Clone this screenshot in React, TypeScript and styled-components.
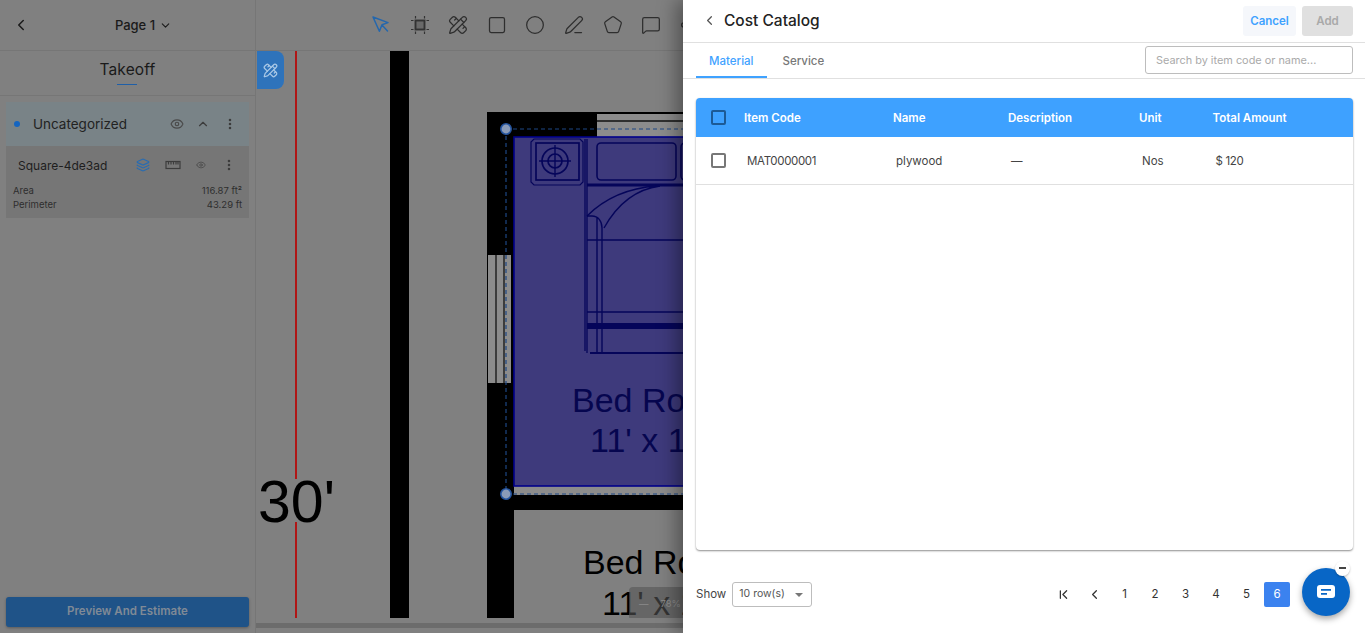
import styled, { createGlobalStyle } from "styled-components";
import {
  ChevronDown,
  ChevronFirst,
  ChevronLeft,
  ChevronUp,
  Circle,
  EllipsisVertical,
  Eye,
  Layers,
  MessageSquare,
  PencilRuler,
  PenLine,
  Pentagon,
  Square,
  Waypoints,
} from "lucide-react";

const Global = createGlobalStyle`
  html, body {
    margin: 0;
    padding: 0;
    height: 100%;
    overflow: hidden;
  }
  body {
    font-family: Inter, "Open Sans", "Liberation Sans", sans-serif;
    color: #1b1b1b;
  }
  * {
    box-sizing: border-box;
  }
`;

const Page = styled.div`
  position: relative;
  display: flex;
  width: 1365px;
  height: 633px;
  overflow: hidden;
  background: #808080;
`;

/* left panel */
const Sidebar = styled.aside`
  display: flex;
  flex-direction: column;
  width: 256px;
  flex-shrink: 0;
  border-right: 1px solid #767676;
`;

const PageBar = styled.div`
  display: flex;
  align-items: center;
  justify-content: center;
  position: relative;
  height: 51px;
  border-bottom: 1px solid #767676;
  font-size: 13px;
  font-weight: 500;
  gap: 4px;
  padding-left: 32px;
  color: #1a1a1a;
`;

const BackIcon = styled.span`
  position: absolute;
  left: 12px;
  top: 16px;
  display: flex;
`;

const TakeoffTab = styled.div`
  position: relative;
  height: 45px;
  border-bottom: 1px solid #767676;
  text-align: center;
  font-size: 15.5px;
  letter-spacing: 0.15px;
  line-height: 38px;
  color: #1a1a1a;

  &::after {
    content: "";
    position: absolute;
    left: 117px;
    bottom: 10px;
    width: 20px;
    height: 1px;
    background: #1f5fa8;
  }
`;

const Group = styled.section`
  margin: 6px 6px 0;
  width: 243px;
`;

const GroupHead = styled.div`
  display: flex;
  align-items: center;
  height: 44px;
  padding: 0 0 0 8px;
  background: #798387;
  font-size: 13.5px;
  color: #222;
`;

const Dot = styled.span`
  width: 6px;
  height: 6px;
  border-radius: 50%;
  background: #1565c0;
  margin-right: 13px;
`;

const Grow = styled.span`
  flex: 1;
`;

const IconSlot = styled.span<{ $w: number; $color?: string }>`
  display: flex;
  justify-content: center;
  width: ${(p) => p.$w}px;
  color: ${(p) => p.$color || "#3c3c3c"};
`;

const ShapeBlock = styled.div`
  height: 72px;
  background: #767676;
  padding: 0 7px;
`;

const ShapeHead = styled.div`
  display: flex;
  align-items: center;
  height: 38px;
  padding-left: 5px;
  font-size: 12px;
  color: #1e1e1e;
`;

const Metric = styled.div`
  display: flex;
  justify-content: space-between;
  height: 14px;
  font-size: 9.5px;
  line-height: 14px;
  color: #2e2e2e;
`;

const Preview = styled.button`
  margin: auto 6px 6px;
  height: 30px;
  width: 243px;
  padding: 0 0 2px;
  border: 0;
  border-radius: 3px;
  background: #1f5388;
  color: #808a96;
  font: 600 11.5px Inter, sans-serif;
  box-shadow: 0 1px 3px rgba(0, 0, 0, 0.3);
`;

/* canvas */
const Canvas = styled.main`
  flex: 1;
  display: flex;
  flex-direction: column;
  min-width: 0;
`;

const Toolbar = styled.div`
  display: flex;
  align-items: center;
  gap: 18.6px;
  height: 51px;
  padding-left: 115px;
  border-bottom: 1px solid #767676;
  color: #2e2e2e;
  flex-shrink: 0;
`;

const PlanArea = styled.div`
  position: relative;
  height: 567px;
  overflow: hidden;
  flex-shrink: 0;
`;

const Plan = styled.svg`
  display: block;
`;

const SideTab = styled.div`
  position: absolute;
  left: 1px;
  top: 0;
  width: 27px;
  height: 38px;
  display: flex;
  align-items: center;
  justify-content: center;
  border-radius: 0 8px 8px 0;
  background: #2e73bb;
  color: #a9c8e6;
`;

const ZoomPill = styled.div`
  position: absolute;
  left: 373px;
  top: 536px;
  width: 120px;
  height: 33px;
  padding-left: 10px;
  display: flex;
  align-items: center;
  gap: 12px;
  border-radius: 4px;
  background: rgba(85, 85, 85, 0.6);
  color: #8c8c8c;
  font-size: 9.5px;
`;

const ScrollTrack = styled.div`
  height: 5px;
  margin-top: 5px;
  background: #6c6c6c;
`;

/* drawer */
const Drawer = styled.div`
  position: absolute;
  top: 0;
  right: 0;
  bottom: 0;
  width: 682px;
  display: flex;
  flex-direction: column;
  background: #fff;
  box-shadow: -6px 0 18px rgba(0, 0, 0, 0.38);
`;

const DrawerHead = styled.header`
  display: flex;
  align-items: center;
  height: 43px;
  flex-shrink: 0;
  padding: 0 12px 1px 19px;
  border-bottom: 1px solid #e0e0e0;
`;

const Title = styled.h1`
  margin: 0 0 0 7px;
  flex: 1;
  font-size: 15.5px;
  font-weight: 500;
  color: #222;
`;

const HeadButton = styled.button<{ $primary?: boolean }>`
  height: 30px;
  width: ${(p) => (p.$primary ? 51 : 53)}px;
  margin-left: ${(p) => (p.$primary ? 6 : 0)}px;
  padding: 0;
  border: 0;
  border-radius: 3px;
  background: ${(p) => (p.$primary ? "#e0e0e0" : "#f5f7fb")};
  color: ${(p) => (p.$primary ? "#a9a9a9" : "#3fa2ff")};
  font: 600 11.5px Inter, sans-serif;
`;

const TabRow = styled.div`
  display: flex;
  align-items: stretch;
  height: 36px;
  flex-shrink: 0;
  padding: 0 12px 0 13px;
  border-bottom: 1px solid #e0e0e0;
`;

const Tab = styled.div<{ $active?: boolean }>`
  display: flex;
  align-items: center;
  justify-content: center;
  height: 35px;
  padding: 2px ${(p) => (p.$active ? 13 : 15)}px 0 ${(p) => (p.$active ? 13 : 16)}px;
  font-size: 11.5px;
  font-weight: 500;
  color: ${(p) => (p.$active ? "#3fa2ff" : "#777")};
  border-bottom: 2px solid ${(p) => (p.$active ? "#3fa2ff" : "transparent")};
`;

const Search = styled.input`
  margin: 3px 0 0 auto;
  width: 208px;
  height: 28px;
  padding: 0 10px;
  border: 1px solid #bdbdbd;
  border-radius: 3px;
  font: 400 10.9px Inter, sans-serif;
  &::placeholder {
    color: #aaa;
  }
`;

const TableCard = styled.div`
  margin: 19px 12px 0 13px;
  height: 452px;
  flex-shrink: 0;
  border-radius: 4px;
  background: #fff;
  overflow: hidden;
  box-shadow: 0 1px 2px rgba(0, 0, 0, 0.45);
`;

const columns = "48px 149px 115px 131px 73.5px 1fr";

const HeadRow = styled.div`
  display: grid;
  grid-template-columns: ${columns};
  align-items: center;
  height: 39px;
  background: #3ea1ff;
  color: #fff;
  font-size: 11.5px;
  font-weight: 600;
`;

const BodyRow = styled.div`
  display: grid;
  grid-template-columns: ${columns};
  align-items: center;
  height: 48px;
  border-bottom: 1px solid #e0e0e0;
  font-size: 11.5px;
  color: #444;
`;

const Cell = styled.div<{ $tight?: boolean }>`
  padding-left: 3px;
  letter-spacing: ${(p) => (p.$tight ? "-0.35px" : "0")};
`;

const Check = styled.span<{ $dark?: boolean }>`
  display: block;
  width: 15px;
  height: 15px;
  margin-left: 15px;
  border: 2px solid ${(p) => (p.$dark ? "#1c5a96" : "#777")};
  border-radius: 2px;
`;

const Footer = styled.footer`
  display: flex;
  align-items: center;
  height: 57px;
  margin-top: 19px;
  padding: 0 75px 7px 13px;
  font-size: 11.5px;
  color: #444;
`;

const RowSelect = styled.div`
  display: flex;
  align-items: center;
  justify-content: space-between;
  width: 80px;
  height: 25px;
  margin-left: 6px;
  padding: 0 8px 2px 6px;
  border: 1px solid #bdbdbd;
  border-radius: 3px;
  font-size: 10.5px;
  color: #555;
`;

const Caret = styled.span`
  width: 0;
  height: 0;
  margin-top: 3px;
  border-left: 4px solid transparent;
  border-right: 4px solid transparent;
  border-top: 4px solid #777;
`;

const Pager = styled.nav`
  display: flex;
  gap: 4.5px;
  margin-left: auto;
`;

const PageCell = styled.div<{ $active?: boolean }>`
  display: flex;
  align-items: center;
  justify-content: center;
  width: 26px;
  height: 25px;
  border-radius: 2px;
  background: ${(p) => (p.$active ? "#3b82ef" : "transparent")};
  color: ${(p) => (p.$active ? "#fff" : "#333")};
  font-size: 11.5px;
`;

const ChatFab = styled.div`
  position: absolute;
  right: 15px;
  bottom: 17px;
  width: 48px;
  height: 48px;
  display: flex;
  align-items: center;
  justify-content: center;
  border-radius: 50%;
  background: #0866c6;
  box-shadow: 0 3px 6px rgba(0, 0, 0, 0.35);
`;

const Minimize = styled.span`
  position: absolute;
  top: -7px;
  right: 0;
  width: 15px;
  height: 15px;
  border-radius: 50%;
  background: #fff;
  box-shadow: 0 1px 2px rgba(0, 0, 0, 0.25);

  &::after {
    content: "";
    position: absolute;
    left: 4px;
    top: 6px;
    width: 7px;
    height: 2px;
    background: #444;
  }
`;

function SelectArrow() {
  return (
    <svg width="20" height="20" viewBox="0 0 20 20" fill="none" stroke="#2467ad" strokeWidth="1.5" strokeLinejoin="round" strokeLinecap="round">
      <path d="M2 2l15 5.6-6 2.2-2.6 6.4zM11 10l5.5 6" />
    </svg>
  );
}

function FrameIcon() {
  return (
    <svg width="20" height="20" viewBox="0 0 20 20" fill="none" stroke="#333" strokeWidth="1.2">
      <rect x="5.5" y="5.5" width="9" height="9" strokeWidth="1.9" fill="#6a6a6a" />
      <path d="M5.5 1v2.5M14.5 1v2.5M5.5 16.5V19M14.5 16.5V19M1 5.5h2.5M1 14.5h2.5M16.5 5.5H19M16.5 14.5H19" />
    </svg>
  );
}

function RulerIcon() {
  return (
    <svg width="16" height="10" viewBox="0 0 16 10" fill="none" stroke="#3c3c3c" strokeWidth="1.2">
      <rect x="1" y="1.5" width="14" height="7" />
      <path d="M3.5 1.5v3M6 1.5v3M8.5 1.5v3M11 1.5v3M13 1.5v3" />
    </svg>
  );
}

function ChatIcon() {
  return (
    <svg width="20" height="18" viewBox="0 0 20 18">
      <path d="M4 2h12a3 3 0 0 1 3 3v7a3 3 0 0 1-3 3H4a3 3 0 0 1-3-3V5a3 3 0 0 1 3-3z" fill="#fff" />
      <path d="M5 6.8h10M5 10.8h6" stroke="#0866c6" strokeWidth="1.8" />
    </svg>
  );
}

const PLAN_TEXT = "Liberation Sans, Arial, sans-serif";
const LINE = "#05055a";

// viewBox uses page coordinates so the drawing reads the same as the screenshot
function FloorPlan() {
  return (
    <Plan width="444" height="567" viewBox="256 51 444 567">
      <path d="M296 51V479M296 522V618" stroke="#b01616" strokeWidth="2" />
      <text x="258" y="522" fontFamily={PLAN_TEXT} fontSize="59" fill="#000">30'</text>
      <rect x="390" y="51" width="19" height="567" fill="#000" />

      <rect x="487" y="112" width="27" height="506" fill="#000" />
      <rect x="487" y="112" width="213" height="25" fill="#000" />
      <rect x="597" y="114" width="103" height="23" fill="#8c8c8c" />
      <path d="M597 121h103" stroke="#111" strokeWidth="1.5" />
      <rect x="488" y="255" width="23" height="128" fill="#8c8c8c" />
      <path d="M496 255v128M504 255v128" stroke="#222" strokeWidth="1.5" />
      <rect x="514" y="486" width="186" height="9" fill="#8c8c8c" />
      <rect x="514" y="495" width="186" height="15" fill="#000" />

      <rect x="514" y="137" width="190" height="349" fill="#3e3a7c" stroke="#00008a" strokeWidth="1.6" />
      <g fill="none" stroke={LINE} strokeWidth="1.2">
        <path d="M534 139h46l3 3v40l-3 3h-46l-3-3v-40z" />
        <rect x="536" y="143" width="43" height="37" strokeWidth="1.7" />
        <circle cx="555" cy="161" r="13" strokeWidth="1.7" />
        <circle cx="555" cy="161" r="7" strokeWidth="1.7" />
        <path d="M539 161h32M555 145v32" strokeWidth="1.4" />
        <path d="M585 139v212M587 139v214" strokeWidth="1.3" />
        <rect x="597" y="143" width="79" height="37" rx="4" strokeWidth="1.6" />
        <rect x="681" y="143" width="40" height="37" rx="4" strokeWidth="1.6" />
        <path d="M587 185h120" strokeWidth="3" />
        <path d="M587 216c16-16 40-28 70-30M604 228c10-18 26-38 56-42" strokeWidth="1.4" />
        <path d="M587 216h5c6 0 10 5 10 12v125M597 218v135" strokeWidth="1.4" />
        <path d="M587 240h120M587 312h120" strokeWidth="1.4" />
        <path d="M587 326h120" strokeWidth="6" />
        <path d="M590 353h117" strokeWidth="1.8" />
      </g>
      <text x="572" y="412" fontFamily={PLAN_TEXT} fontSize="34" fill="#06064f">Bed Room</text>
      <text x="590" y="452" fontFamily={PLAN_TEXT} fontSize="34" fill="#06064f">11' x 12'</text>

      <text x="583" y="574" fontFamily={PLAN_TEXT} fontSize="34" fill="#000">Bed Room</text>
      <text x="602" y="615" fontFamily={PLAN_TEXT} fontSize="34" fill="#000">11' x 12'</text>

      <path d="M506 129V494M506 129H700M506 494H700" fill="none" stroke="#1d4684" strokeWidth="1.2" strokeDasharray="4 3" />
      <circle cx="506" cy="129" r="5.2" fill="#8a9bb8" stroke="#24549f" strokeWidth="1.6" />
      <circle cx="506" cy="494" r="5.2" fill="#8a9bb8" stroke="#24549f" strokeWidth="1.6" />
    </Plan>
  );
}

export default function App() {
  return (
    <Page>
      <Global />
      <Sidebar>
        <PageBar>
          <BackIcon>
            <ChevronLeft size={18} />
          </BackIcon>
          Page 1 <ChevronDown size={13} />
        </PageBar>
        <TakeoffTab>Takeoff</TakeoffTab>
        <Group>
          <GroupHead>
            <Dot />
            Uncategorized
            <Grow />
            <IconSlot $w={14}>
              <Eye size={14} color="#4a4a4a" />
            </IconSlot>
            <IconSlot $w={38}>
              <ChevronUp size={14} />
            </IconSlot>
            <IconSlot $w={16}>
              <EllipsisVertical size={14} strokeWidth={2.4} />
            </IconSlot>
            <IconSlot $w={11} />
          </GroupHead>
          <ShapeBlock>
            <ShapeHead>
              Square-4de3ad
              <Grow />
              <IconSlot $w={14} $color="#2a6cb0">
                <Layers size={14} />
              </IconSlot>
              <IconSlot $w={46}>
                <RulerIcon />
              </IconSlot>
              <IconSlot $w={10}>
                <Eye size={14} color="#4a4a4a" />
              </IconSlot>
              <IconSlot $w={10} />
              <IconSlot $w={26}>
                <EllipsisVertical size={14} strokeWidth={2.4} />
              </IconSlot>
            </ShapeHead>
            <Metric>
              <span>Area</span>
              <span>116.87 ft²</span>
            </Metric>
            <Metric>
              <span>Perimeter</span>
              <span>43.29 ft</span>
            </Metric>
          </ShapeBlock>
        </Group>
        <Preview>Preview And Estimate</Preview>
      </Sidebar>

      <Canvas>
        <Toolbar>
          <SelectArrow />
          <FrameIcon />
          <PencilRuler size={20} strokeWidth={1.5} />
          <Square size={20} strokeWidth={1.5} />
          <Circle size={20} strokeWidth={1.5} />
          <PenLine size={20} strokeWidth={1.5} />
          <Pentagon size={20} strokeWidth={1.5} />
          <MessageSquare size={20} strokeWidth={1.5} />
          <Waypoints size={20} strokeWidth={1.5} />
        </Toolbar>
        <PlanArea>
          <FloorPlan />
          <SideTab>
            <PencilRuler size={15} />
          </SideTab>
          <ZoomPill>
            — <span>78%</span>
          </ZoomPill>
        </PlanArea>
        <ScrollTrack />
      </Canvas>

      <Drawer>
        <DrawerHead>
          <ChevronLeft size={15} color="#555" />
          <Title>Cost Catalog</Title>
          <HeadButton>Cancel</HeadButton>
          <HeadButton $primary>Add</HeadButton>
        </DrawerHead>
        <TabRow>
          <Tab $active>Material</Tab>
          <Tab>Service</Tab>
          <Search placeholder="Search by item code or name..." />
        </TabRow>
        <TableCard>
          <HeadRow>
            <Check $dark />
            <div>Item Code</div>
            <div>Name</div>
            <div>Description</div>
            <div>Unit</div>
            <div>Total Amount</div>
          </HeadRow>
          <BodyRow>
            <Check />
            <Cell $tight>MAT0000001</Cell>
            <Cell>plywood</Cell>
            <Cell>—</Cell>
            <Cell>Nos</Cell>
            <Cell $tight>$ 120</Cell>
          </BodyRow>
        </TableCard>
        <Footer>
          Show
          <RowSelect>
            10 row(s)
            <Caret />
          </RowSelect>
          <Pager>
            <PageCell>
              <ChevronFirst size={15} />
            </PageCell>
            <PageCell>
              <ChevronLeft size={15} />
            </PageCell>
            {[1, 2, 3, 4, 5, 6].map((n) => (
              <PageCell key={n} $active={n === 6}>
                {n}
              </PageCell>
            ))}
          </Pager>
        </Footer>
        <ChatFab>
          <Minimize />
          <ChatIcon />
        </ChatFab>
      </Drawer>
    </Page>
  );
}
